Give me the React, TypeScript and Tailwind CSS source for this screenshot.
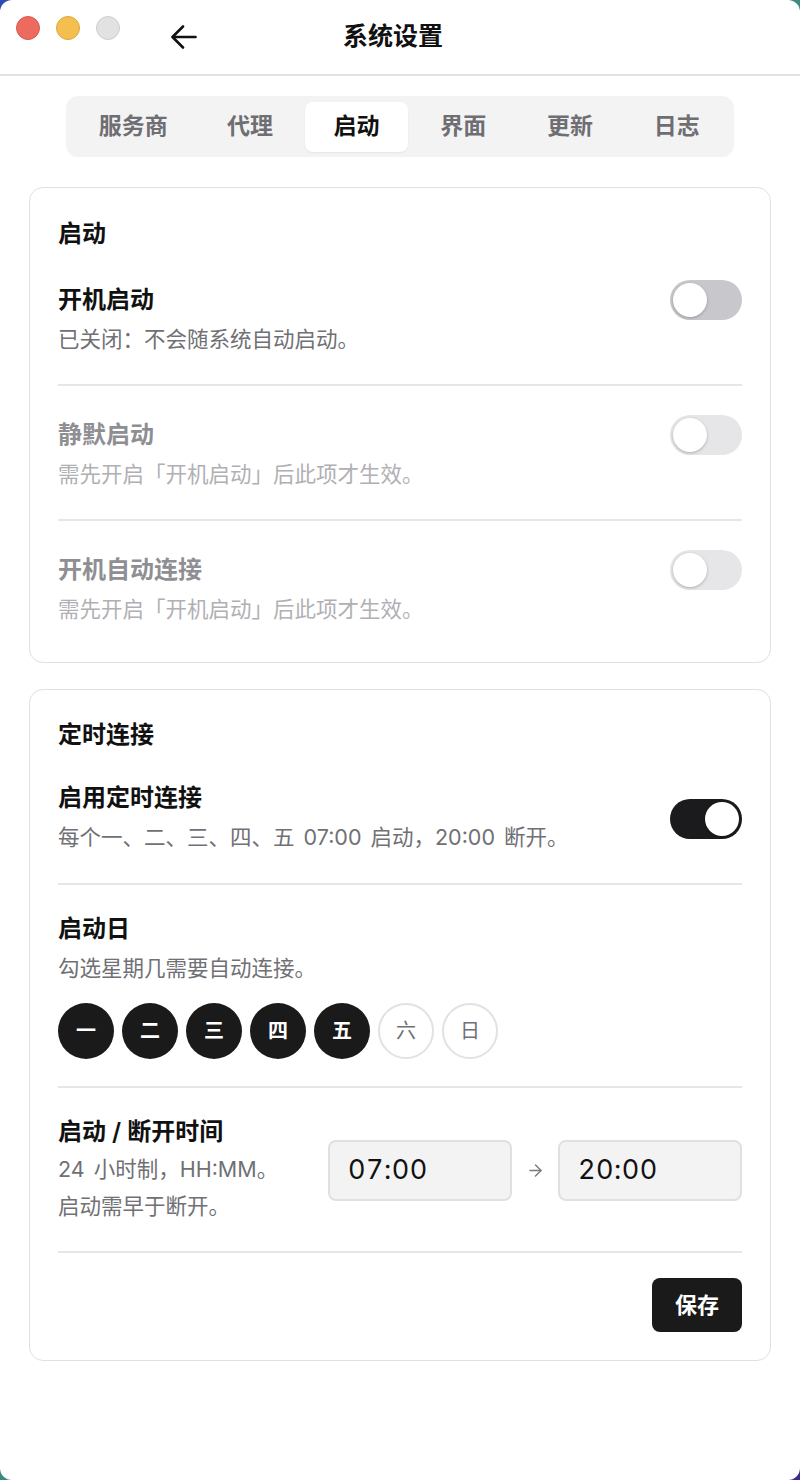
import { ArrowRight } from "lucide-react";

const tabs = [
  { label: "服务商", w: "w-[123px]" },
  { label: "代理", w: "w-[103px]" },
  { label: "启动", w: "w-[103px]" },
  { label: "界面", w: "w-[103px]" },
  { label: "更新", w: "w-[103px]" },
  { label: "日志", w: "w-[103px]" },
];

const days = [
  { label: "一", on: true },
  { label: "二", on: true },
  { label: "三", on: true },
  { label: "四", on: true },
  { label: "五", on: true },
  { label: "六", on: false },
  { label: "日", on: false },
];

function Toggle({ on, disabled }: { on: boolean; disabled?: boolean }) {
  const track = on ? "bg-[#1b1b1d]" : disabled ? "bg-[#e6e6e9]" : "bg-[#c8c8cc]";
  return (
    <div className={`flex h-[40px] w-[72px] shrink-0 items-center rounded-full px-[3px] ${track} ${on ? "justify-end" : "justify-start"}`}>
      <div className="h-[34px] w-[34px] rounded-full bg-white shadow-[0_1px_3px_rgba(0,0,0,0.25)]" />
    </div>
  );
}

// toggle sits level with the title line
function SettingRow({
  title,
  desc,
  on,
  disabled,
  first,
}: {
  title: string;
  desc: string;
  on: boolean;
  disabled?: boolean;
  first?: boolean;
}) {
  return (
    <div className={`${first ? "pt-[30px]" : "pt-[29px]"} pb-[27px]`}>
      <div className="flex h-[40px] items-center justify-between">
        <div className={`text-[24px] font-semibold ${disabled ? "text-[#8e8e93]" : "text-[#111]"}`}>{title}</div>
        <Toggle on={on} disabled={disabled} />
      </div>
      <div className={`mt-[1px] text-[21.5px] leading-[36px] ${disabled ? "text-[#b0b0b4]" : "text-[#707075]"}`}>{desc}</div>
    </div>
  );
}

function Divider() {
  return <div className="h-[2px] bg-[#e6e6e6]" />;
}

function TimeBox({ value }: { value: string }) {
  return (
    <div className="flex h-[61px] w-[184px] items-center rounded-[8px] border-2 border-[#e0e0e0] bg-[#f3f3f3] pl-[18px] text-[27px] tracking-[0.5px] tabular-nums text-[#111]">
      {value}
    </div>
  );
}

export default function App() {
  return (
    <div className="bg-linear-to-br from-[#2b4db3] via-[#3d8a82] to-[#3a2a8f] font-['Inter','Noto_Sans_CJK_SC',sans-serif]">
      <div className="flex h-[1480px] w-[800px] flex-col overflow-hidden rounded-[12px] bg-white">
        {/* title bar */}
        <header className="flex h-[76px] shrink-0 items-center border-b-2 border-[#e2e2e2]">
          <div className="flex gap-[16px] self-start pt-[16px] pl-[16px]">
            <div className="h-[24px] w-[24px] rounded-full border border-[#d85a4f] bg-[#ed6a5e]" />
            <div className="h-[24px] w-[24px] rounded-full border border-[#dca73d] bg-[#f5bf4f]" />
            <div className="h-[24px] w-[24px] rounded-full border border-[#cfcfcf] bg-[#e2e2e2]" />
          </div>
          <svg className="ml-[51px]" width="26" height="24" viewBox="0 0 26 24" fill="none" stroke="#111" strokeWidth="2.6" strokeLinecap="round" strokeLinejoin="round">
            <path d="M24.5 12H2" />
            <path d="M12 1.5 1.5 12 12 22.5" />
          </svg>
          <div className="ml-[146px] text-[25px] font-bold text-[#111]">系统设置</div>
        </header>

        <main className="flex flex-col px-[29px]">
          {/* tabs */}
          <div className="mx-auto mt-[20px] flex h-[61px] w-[668px] items-center gap-[4px] rounded-[12px] bg-[#f3f3f3] px-[6px]">
            {tabs.map((t) => (
              <div
                key={t.label}
                className={`flex h-[50px] ${t.w} items-center justify-center rounded-[8px] text-[23px] font-semibold ${
                  t.label === "启动" ? "bg-white text-[#111] shadow-[0_1px_2px_rgba(0,0,0,0.06)]" : "text-[#6e6e73]"
                }`}
              >
                {t.label}
              </div>
            ))}
          </div>

          {/* startup card */}
          <section className="mt-[30px] rounded-[14px] border border-[#e0e0e0] px-[28px] pt-[30px] pb-[8px]">
            <h2 className="text-[24px] font-semibold leading-[32px] text-[#111]">启动</h2>
            <SettingRow first title="开机启动" desc="已关闭：不会随系统自动启动。" on={false} />
            <Divider />
            <SettingRow title="静默启动" desc="需先开启「开机启动」后此项才生效。" on={false} disabled />
            <Divider />
            <SettingRow title="开机自动连接" desc="需先开启「开机启动」后此项才生效。" on={false} disabled />
          </section>

          {/* schedule card */}
          <section className="mt-[26px] rounded-[14px] border border-[#e0e0e0] px-[28px] pt-[29px] pb-[8px]">
            <h2 className="text-[24px] font-semibold leading-[32px] text-[#111]">定时连接</h2>
            <div className="flex items-center justify-between pt-[31px] pb-[28px]">
              <div>
                <div className="text-[24px] font-semibold leading-[32px] text-[#111]">启用定时连接</div>
                <div className="mt-[5px] text-[21.5px] leading-[36px] text-[#707075] [word-spacing:3px]">
                  每个一、二、三、四、五 07:00 启动，20:00 断开。
                </div>
              </div>
              <Toggle on />
            </div>
            <Divider />

            <div className="pt-[28px] pb-[27px]">
              <div className="text-[24px] font-semibold leading-[32px] text-[#111]">启动日</div>
              <div className="mt-[5px] text-[21.5px] leading-[36px] text-[#707075]">勾选星期几需要自动连接。</div>
              <div className="mt-[17px] flex gap-[8px]">
                {days.map((d) => (
                  <div
                    key={d.label}
                    className={`flex h-[56px] w-[56px] items-center justify-center rounded-full text-[20px] ${
                      d.on ? "bg-[#1a1a1a] font-semibold text-white" : "border-2 border-[#e2e2e2] bg-white text-[#707075]"
                    }`}
                  >
                    {d.label}
                  </div>
                ))}
              </div>
            </div>
            <Divider />

            <div className="flex items-center justify-between pt-[28px] pb-[26px]">
              <div>
                <div className="text-[24px] font-semibold leading-[32px] text-[#111]">启动 / 断开时间</div>
                <div className="mt-[3px] text-[21.5px] leading-[37px] text-[#707075] [word-spacing:3px]">
                  24 小时制，HH:MM。
                  <br />
                  启动需早于断开。
                </div>
              </div>
              <div className="flex items-center">
                <TimeBox value="07:00" />
                <div className="flex w-[46px] justify-center text-[#7a7a7e]">
                  <ArrowRight size={19} strokeWidth={1.8} />
                </div>
                <TimeBox value="20:00" />
              </div>
            </div>
            <Divider />

            <div className="flex justify-end pt-[25px] pb-[20px]">
              <button className="flex h-[54px] w-[90px] items-center justify-center rounded-[8px] bg-[#1a1a1a] text-[22px] font-semibold text-white">
                保存
              </button>
            </div>
          </section>
        </main>
      </div>
    </div>
  );
}
